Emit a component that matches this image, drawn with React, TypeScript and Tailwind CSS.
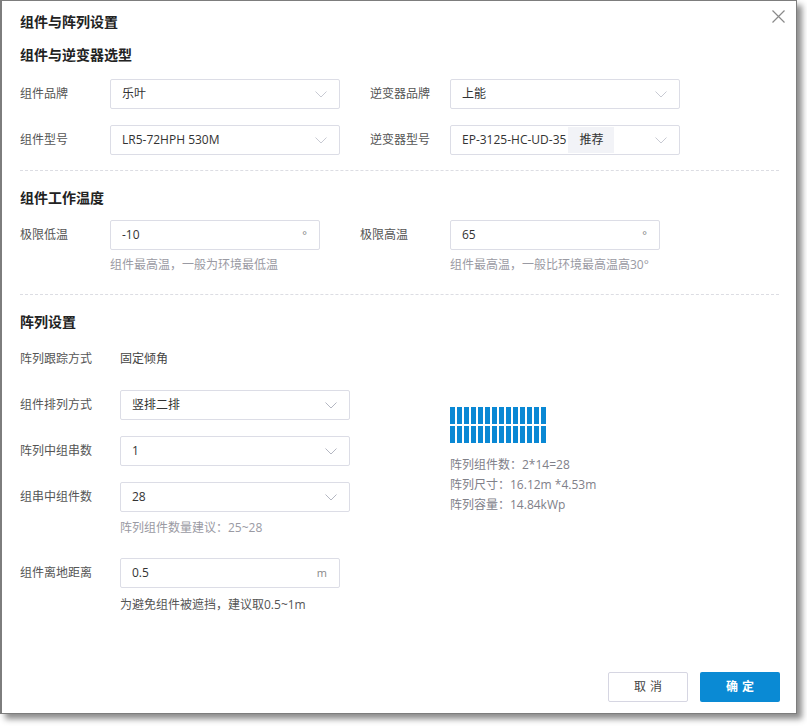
import React from "react";

const FONT = { fontFamily: '"Open Sans", "Noto Sans CJK SC", sans-serif' };

function Chevron({ dark }: { dark?: boolean }) {
  return (
    <svg width="12" height="7" viewBox="0 0 12 7" className="shrink-0">
      <polyline points="0.5,0.5 6,6 11.5,0.5" fill="none" stroke={dark ? "#b4b7c2" : "#c8cad3"} strokeWidth="1" />
    </svg>
  );
}

function Select({ value, w, tag, dark }: { value: string; w: string; tag?: boolean; dark?: boolean }) {
  return (
    <div className={`${w} h-[30px] border border-[#dcdde6] rounded-[2px] flex items-center pl-[11px] pr-[12px] text-[12px] text-[#333]`}>
      <span className="whitespace-nowrap">{value}</span>
      {tag && <span className="ml-[2px] h-[26px] px-[11px] bg-[#f2f3f7] flex items-center text-[#333]">推荐</span>}
      <span className="flex-1" />
      <Chevron dark={dark} />
    </div>
  );
}

function Input({ value, unit, w }: { value: string; unit: string; w: string }) {
  return (
    <div className={`${w} h-[30px] border border-[#dcdde6] rounded-[2px] flex items-center pl-[11px] pr-[12px] text-[12px] text-[#333]`}>
      <span>{value}</span>
      <span className="flex-1" />
      <span className="text-[#888] text-[11px]">{unit}</span>
    </div>
  );
}

function Divider() {
  return <div className="h-0 border-t border-dashed border-[#dcdde3] mr-[17px]" />;
}

export default function App() {
  const cols = Array.from({ length: 14 });
  return (
    <div className="w-[807px] h-[726px] bg-white relative" style={FONT}>
      <div className="w-[797px] h-[714px] bg-white border-l-2 border-t border-r border-b border-[#7d7d7d] shadow-[5px_5px_6px_rgba(0,0,0,0.45)] relative flex flex-col pl-[18px]">
        <svg className="absolute right-[11px] top-[9px]" width="13" height="13" viewBox="0 0 13 13">
          <path d="M0.5 0.5 L12.5 12.5 M12.5 0.5 L0.5 12.5" stroke="#8a8a8a" strokeWidth="1.2" fill="none" />
        </svg>

        <div className="mt-[11px] h-[20px] leading-[20px] text-[14px] font-semibold text-[#222]">组件与阵列设置</div>

        <div className="mt-[13px] h-[20px] leading-[20px] text-[14px] font-semibold text-[#222]">组件与逆变器选型</div>

        <div className="mt-[14px] flex items-center text-[12px] text-[#555]">
          <span className="w-[90px]">组件品牌</span>
          <Select value="乐叶" w="w-[230px]" />
          <span className="w-[80px] ml-[30px]">逆变器品牌</span>
          <Select value="上能" w="w-[230px]" />
        </div>
        <div className="mt-[16px] flex items-center text-[12px] text-[#555]">
          <span className="w-[90px]">组件型号</span>
          <Select value="LR5-72HPH 530M" w="w-[230px]" />
          <span className="w-[80px] ml-[30px]">逆变器型号</span>
          <Select value="EP-3125-HC-UD-35" w="w-[230px]" tag />
        </div>

        <div className="mt-[15px]">
          <Divider />
        </div>

        <div className="mt-[17px] h-[20px] leading-[20px] text-[14px] font-semibold text-[#222]">组件工作温度</div>

        <div className="mt-[12px] flex text-[12px] text-[#555]">
          <div className="flex flex-col">
            <div className="flex items-center">
              <span className="w-[90px]">极限低温</span>
              <Input value="-10" unit="°" w="w-[210px]" />
            </div>
            <div className="ml-[90px] mt-[6px] h-[18px] leading-[18px] text-[#9a9aa3]">组件最高温，一般为环境最低温</div>
          </div>
          <div className="flex flex-col ml-[40px]">
            <div className="flex items-center">
              <span className="w-[90px]">极限高温</span>
              <Input value="65" unit="°" w="w-[210px]" />
            </div>
            <div className="ml-[90px] mt-[6px] h-[18px] leading-[18px] text-[#9a9aa3]">组件最高温，一般比环境最高温高30°</div>
          </div>
        </div>

        <div className="mt-[20px]">
          <Divider />
        </div>

        <div className="mt-[17px] h-[20px] leading-[20px] text-[14px] font-semibold text-[#222]">阵列设置</div>

        <div className="flex">
          <div className="flex flex-col text-[12px] text-[#555] w-[330px]">
            <div className="mt-[17px] h-[20px] leading-[20px] flex">
              <span className="w-[100px]">阵列跟踪方式</span>
              <span className="text-[#444]">固定倾角</span>
            </div>
            <div className="mt-[21px] flex items-center">
              <span className="w-[100px]">组件排列方式</span>
              <Select value="竖排二排" w="w-[230px]" dark />
            </div>
            <div className="mt-[16px] flex items-center">
              <span className="w-[100px]">阵列中组串数</span>
              <Select value="1" w="w-[230px]" dark />
            </div>
            <div className="mt-[16px] flex items-center">
              <span className="w-[100px]">组串中组件数</span>
              <Select value="28" w="w-[230px]" dark />
            </div>
            <div className="ml-[100px] mt-[7px] h-[18px] leading-[18px] text-[#9a9aa3]">阵列组件数量建议：25~28</div>
            <div className="mt-[21px] flex items-center">
              <span className="w-[100px]">组件离地距离</span>
              <Input value="0.5" unit="m" w="w-[220px]" />
            </div>
            <div className="ml-[100px] mt-[8px] h-[18px] leading-[18px] text-[#555]">为避免组件被遮挡，建议取0.5~1m</div>
          </div>
          <div className="ml-[100px] mt-[75px] flex flex-col">
            <div className="flex flex-col gap-[2px]">
              {[0, 1].map((r) => (
                <div key={r} className="flex gap-[2px]">
                  {cols.map((_, i) => (
                    <div key={i} className="w-[5px] h-[17px] bg-[#0a88d4]" />
                  ))}
                </div>
              ))}
            </div>
            <div className="mt-[12px] flex flex-col text-[12px] text-[#808089] leading-[20px]">
              <span>阵列组件数：2*14=28</span>
              <span>阵列尺寸：16.12m *4.53m</span>
              <span>阵列容量：14.84kWp</span>
            </div>
          </div>
        </div>

        <div className="flex-1" />
        <div className="flex justify-end gap-[12px] mr-[16px] mb-[11px]">
          <button className="w-[80px] h-[30px] border border-[#d6d6e2] rounded-[2px] bg-white text-[12px] text-[#444] tracking-[4px] pl-[4px]">取消</button>
          <button className="w-[80px] h-[30px] rounded-[2px] bg-[#0a8ad4] text-[12px] text-white font-semibold tracking-[4px] pl-[4px]">确定</button>
        </div>
      </div>
    </div>
  );
}
